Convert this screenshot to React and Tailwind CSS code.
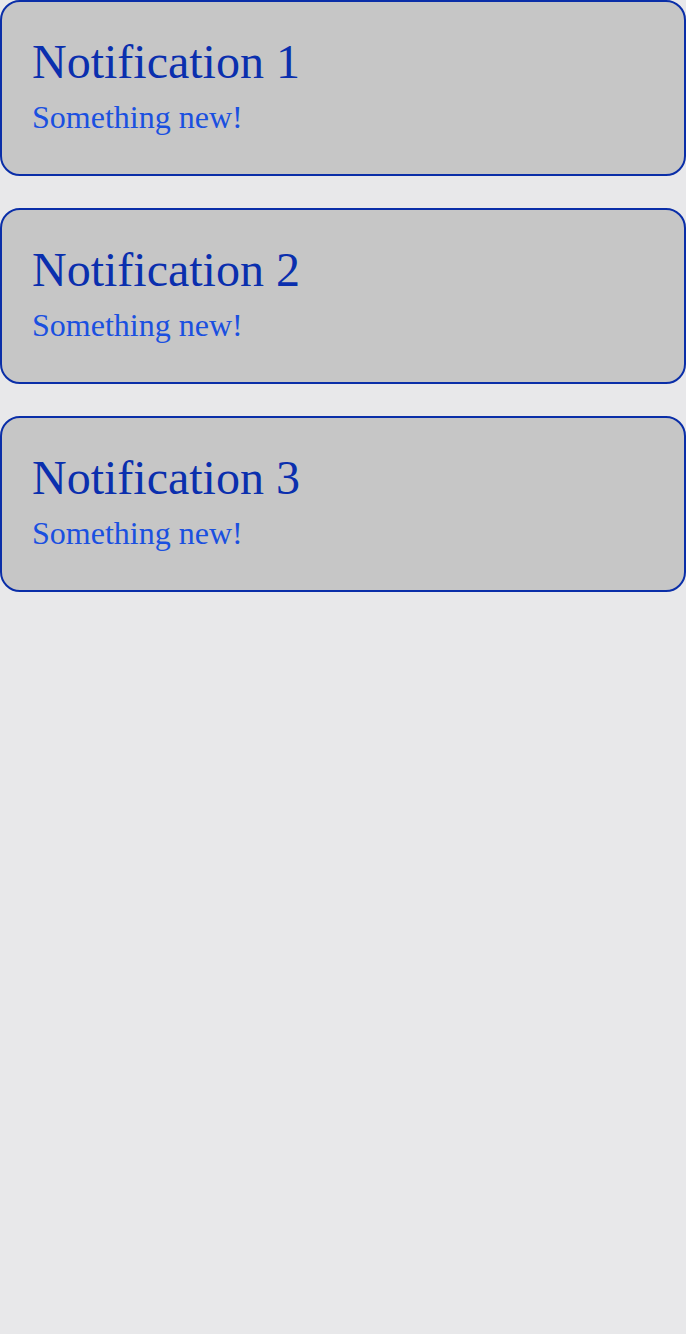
export default function App() {
  const items = [1, 2, 3];
  return (
    <div className="min-h-[1334px] w-full bg-[#e8e8ea] flex flex-col gap-8" style={{ fontFamily: '"Liberation Serif", serif' }}>
      {items.map((n) => (
        <div
          key={n}
          className="h-[176px] border-2 border-[#0a2ea8] rounded-[20px] bg-[#c6c6c6] px-[30px] pt-[32px]"
        >
          <div className="text-[48px] leading-[56px] text-[#0a2fae]">Notification {n}</div>
          <div className="mt-[9px] text-[32px] leading-[36px] text-[#1a50e0]">Something new!</div>
        </div>
      ))}
    </div>
  );
}
